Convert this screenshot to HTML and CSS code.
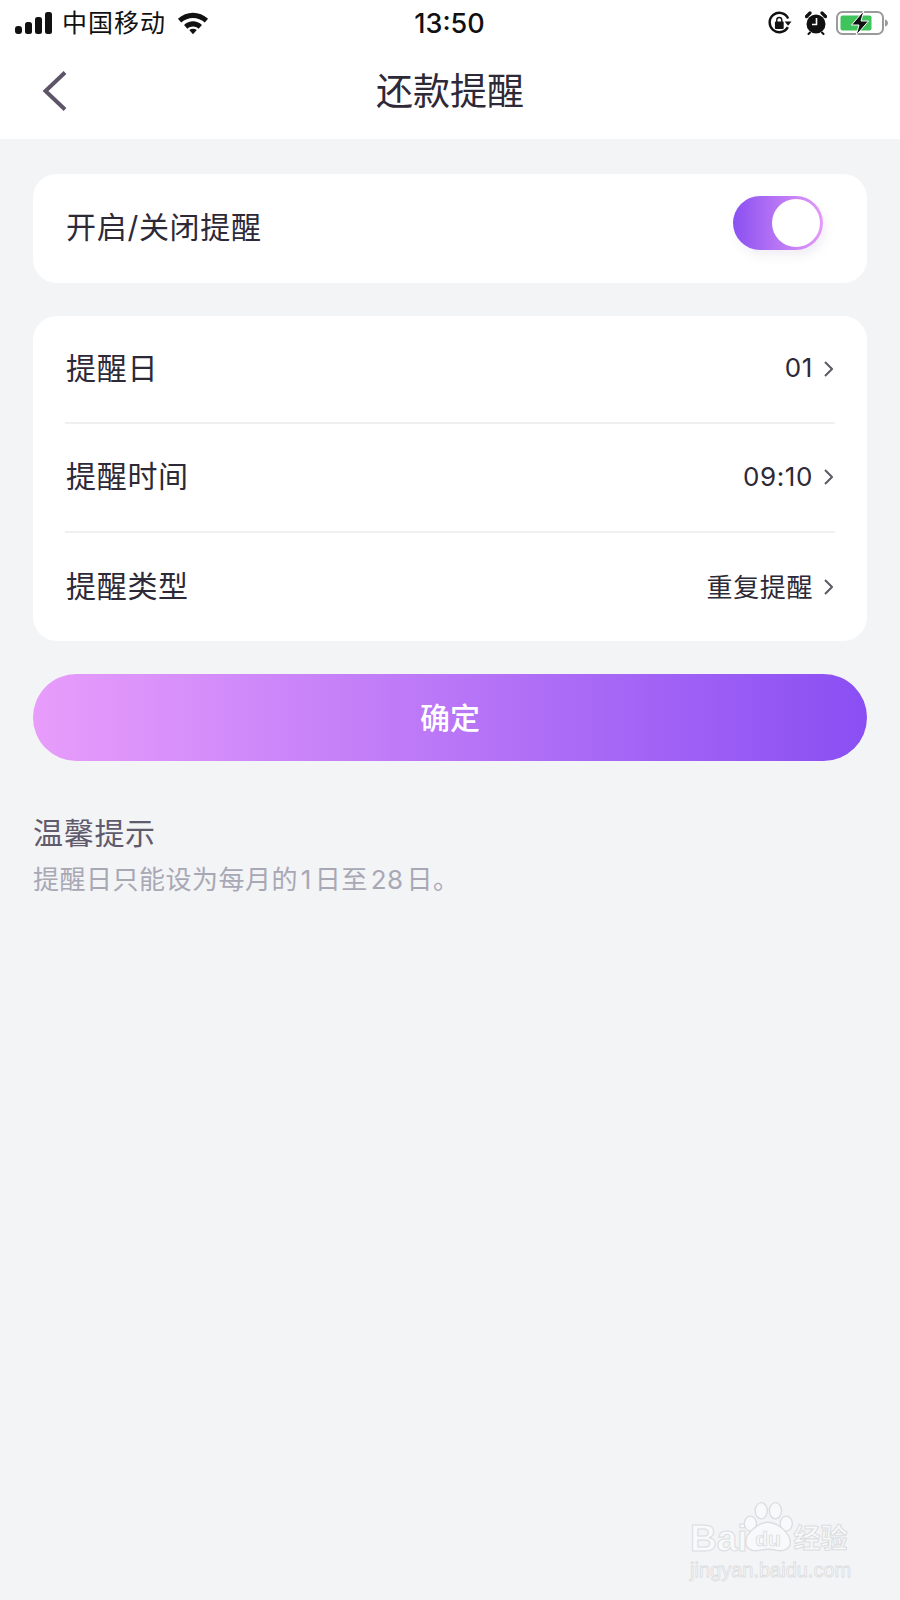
FILE: index.html
```html
<!DOCTYPE html>
<html lang="zh-CN">
<head>
  <meta charset="UTF-8" />
  <meta name="viewport" content="width=device-width, initial-scale=1.0"/>
  <title>还款提醒</title>
  <link rel="stylesheet" href="styles.css">
</head>
<body>
  <header class="top">
    <div class="status-bar">
      <div class="status-left">
        <svg class="signal" width="38" height="24" viewBox="0 0 38 24">
          <rect x="0" y="15" width="7" height="8" rx="3" fill="#111"/>
          <rect x="10" y="11" width="7" height="12" rx="2.500" fill="#111"/>
          <rect x="20" y="6" width="7" height="17" rx="2.500" fill="#111"/>
          <rect x="30" y="1" width="7" height="22" rx="2.500" fill="#111"/>
        </svg>
        <span class="carrier">中国移动</span>
        <svg class="wifi" width="32" height="26" viewBox="0 0 34 26">
          <path d="M1 8.500C10 0 24 0 33 8.500L29.500 12.500C22.500 6 11.500 6 4.500 12.500Z" fill="#111"/>
          <path d="M7.500 15C13 10 21 10 26.500 15L23 19C19.500 16 14.500 16 11 19Z" fill="#111"/>
          <path d="M13 20.500C15.500 18.700 18.500 18.700 21 20.500L17 25Z" fill="#111"/>
        </svg>
      </div>
      <div class="status-time">13:50</div>
      <div class="status-right">
        <svg class="icon-lock" width="26" height="24" viewBox="0 0 26 26">
          <path d="M21.500 17.500A10.500 10.500 0 1 1 21.800 8" fill="none" stroke="#111" stroke-width="2.600"/>
          <path d="M18 11.500h7.500l-3.700 4.500Z" fill="#111"/>
          <rect x="7.500" y="11.500" width="9.500" height="8" rx="1" fill="#111"/>
          <path d="M9.500 12V9.800a2.700 2.700 0 0 1 5.400 0V12" fill="none" stroke="#111" stroke-width="1.500"/>
        </svg>
        <svg class="icon-alarm" width="22" height="24" viewBox="0 0 22 24">
          <circle cx="11" cy="13" r="9.500" fill="#111"/>
          <path d="M11.500 7v6.500H7" fill="none" stroke="#fff" stroke-width="1.600"/>
          <path d="M1.500 5.500L5 2M20.500 5.500L17 2" stroke="#111" stroke-width="3.200" stroke-linecap="round"/>
          <path d="M5 21.500L3.500 23M17 21.500L18.500 23" stroke="#111" stroke-width="2" stroke-linecap="round"/>
        </svg>
        <svg class="icon-battery" width="52" height="26" viewBox="0 0 52 26">
          <rect x="1" y="2" width="46" height="22" rx="5.500" fill="none" stroke="#9a9a9a" stroke-width="2"/>
          <rect x="4.500" y="5.500" width="31" height="15" rx="2" fill="#3fc35b"/>
          <path d="M49 9.500c2 .5 3 2 3 3.500s-1 3-3 3.500Z" fill="#9a9a9a"/>
          <path d="M28 .500L15.500 15H23L20 25.500 32.500 11H25Z" fill="#111" stroke="#fff" stroke-width="1"/>
        </svg>
      </div>
    </div>
    <nav class="nav-bar">
      <svg class="back" width="26" height="42" viewBox="0 0 26 42">
        <path d="M23 2.500L3.500 21 23 39.500" fill="none" stroke="#5d5468" stroke-width="4"/>
      </svg>
      <h1 class="nav-title">还款提醒</h1>
    </nav>
  </header>

  <main class="content">
    <section class="card">
      <div class="row">
        <span class="row-label">开启/关闭提醒</span>
        <div class="toggle"><span class="knob"></span></div>
      </div>
    </section>

    <section class="card">
      <div class="row row-line">
        <span class="row-label">提醒日</span>
        <span class="row-value">01
          <svg class="arrow" width="9" height="16" viewBox="0 0 9 16"><path d="M1 1l7 7-7 7" fill="none" stroke="#5f5b66" stroke-width="2"/></svg>
        </span>
      </div>
      <div class="row row-line">
        <span class="row-label">提醒时间</span>
        <span class="row-value">09:10
          <svg class="arrow" width="9" height="16" viewBox="0 0 9 16"><path d="M1 1l7 7-7 7" fill="none" stroke="#5f5b66" stroke-width="2"/></svg>
        </span>
      </div>
      <div class="row">
        <span class="row-label">提醒类型</span>
        <span class="row-value">重复提醒
          <svg class="arrow" width="9" height="16" viewBox="0 0 9 16"><path d="M1 1l7 7-7 7" fill="none" stroke="#5f5b66" stroke-width="2"/></svg>
        </span>
      </div>
    </section>

    <button class="confirm" type="button">确定</button>

    <div class="tips">
      <h2 class="tips-title">温馨提示</h2>
      <p class="tips-text">提醒日只能设为每月的&#8202;1&#8202;日至&#8202;28&#8202;日。</p>
    </div>
  </main>

  <!-- watermark -->
  <div class="mark">
    <div class="mark-top">
      <span class="mark-bai">Bai</span>
      <svg class="paw" width="50" height="50" viewBox="0 0 74 74">
        <g fill="#f8f9fa" stroke="#dcdde0" stroke-width="2">
          <ellipse cx="11" cy="32" rx="9" ry="11"/>
          <ellipse cx="27" cy="13" rx="9" ry="12"/>
          <ellipse cx="48" cy="13" rx="9" ry="12"/>
          <ellipse cx="64" cy="32" rx="9" ry="11"/>
          <path d="M37 30c13 0 33 15 33 30 0 9-9 13-17 12-6-1-11-2-16-2s-10 1-16 2c-8 1-17-3-17-12 0-15 20-30 33-30Z"/>
        </g>
        <text x="37" y="65" class="paw-text">du</text>
      </svg>
      <span class="mark-jy">经验</span>
    </div>
    <div class="mark-url">jingyan.baidu.com</div>
  </div>
</body>
</html>
```

FILE: styles.css
```css
* {
  box-sizing: border-box;
}

body {
  margin: 0;
  width: 900px;
  height: 1600px;
  position: relative;
  overflow: hidden;
  background: #f3f4f6;
  color: #2d2937;
  font-family: "Inter", "Noto Sans CJK SC", sans-serif;
}

/* Top */
.top {
  background: #fff;
  height: 139px;
}

.status-bar {
  height: 46px;
  padding: 0 12px 0 15px;
  display: grid;
  grid-template-columns: 1fr auto 1fr;
  align-items: center;
  color: #111;
}

.status-left {
  display: flex;
  align-items: center;
}

.carrier {
  font-size: 25px;
  letter-spacing: 1px;
  margin-left: 9px;
  line-height: 30px;
}

.wifi {
  margin-left: 11px;
}

.status-time {
  font-size: 27px;
  font-weight: 500;
  margin-right: 4px;
}

.status-right {
  display: flex;
  align-items: center;
  justify-content: flex-end;
}

.icon-alarm {
  margin-left: 12px;
}

.icon-battery {
  margin-left: 9px;
}

.nav-bar {
  height: 93px;
  padding-bottom: 8px;
  position: relative;
  display: flex;
  align-items: center;
  justify-content: center;
}

.back {
  position: absolute;
  left: 42px;
  top: 24px;
}

.nav-title {
  margin: 0;
  font-size: 37px;
  font-weight: 400;
}

/* Cards */
.content {
  padding: 35px 33px 0;
  display: flex;
  flex-direction: column;
  gap: 33px;
}

.card {
  background: #fff;
  border-radius: 24px;
  padding: 0 32px;
}

.row {
  height: 108.500px;
  display: flex;
  align-items: center;
  justify-content: space-between;
}

.row-line {
  border-bottom: 2px solid #f0f0f3;
}

.row-label {
  font-size: 30px;
  letter-spacing: 0.700px;
  margin: 0 0 6px 1px;
}

.row-value {
  display: flex;
  align-items: center;
  gap: 11px;
  font-size: 26px;
  letter-spacing: 0.600px;
  margin: 0 2px 2px 0;
}

.arrow {
  margin-top: 2px;
}

.toggle {
  width: 90px;
  height: 54px;
  margin: 0 12px 10px 0;
  border-radius: 27px;
  padding: 3px;
  display: flex;
  justify-content: flex-end;
  background: linear-gradient(90deg, #8a50f2, #e59af7);
  box-shadow: 3px 6px 10px rgba(120, 100, 160, 0.1);
}

.knob {
  width: 48px;
  height: 48px;
  border-radius: 50%;
  background: #fff;
}

/* Button */
.confirm {
  height: 87px;
  padding: 0 0 4px;
  border: none;
  border-radius: 44px;
  background: linear-gradient(90deg, #e89dfb, #8a4ff3);
  color: #fff;
  font-family: inherit;
  font-size: 30px;
  font-weight: 500;
}

/* Tips */
.tips {
  margin-top: 17px;
}

.tips-title {
  margin: 0;
  font-size: 30px;
  font-weight: 400;
  letter-spacing: 0.700px;
  line-height: 44px;
  color: #5f5a6c;
}

.tips-text {
  margin: 5px 0 0;
  font-size: 26px;
  letter-spacing: 0.500px;
  line-height: 40px;
  color: #a8a8b5;
}

/* Watermark */
.mark {
  position: absolute;
  left: 690px;
  top: 1502px;
  width: 170px;
  color: #f8f9fa;
}

.mark-top {
  display: flex;
  align-items: flex-end;
  height: 50px;
}

.mark-bai {
  font-family: "Liberation Sans", sans-serif;
  font-size: 37px;
  font-weight: 700;
  line-height: 27px;
  -webkit-text-stroke: 1px #dcdde0;
}

.paw {
  margin-left: -5px;
}

.paw-text {
  font-family: "Liberation Sans", sans-serif;
  font-size: 31px;
  font-weight: 700;
  text-anchor: middle;
  fill: #f8f9fa;
  stroke: #d4d5d9;
  stroke-width: 1px;
}

.mark-jy {
  font-size: 27px;
  font-weight: 700;
  line-height: 27px;
  margin-left: 1px;
  -webkit-text-stroke: 1px #dcdde0;
}

.mark-url {
  font-family: "Liberation Sans", sans-serif;
  font-size: 20px;
  line-height: 28px;
  margin-top: 4px;
  -webkit-text-stroke: 0.800px #dcdde0;
}
```
